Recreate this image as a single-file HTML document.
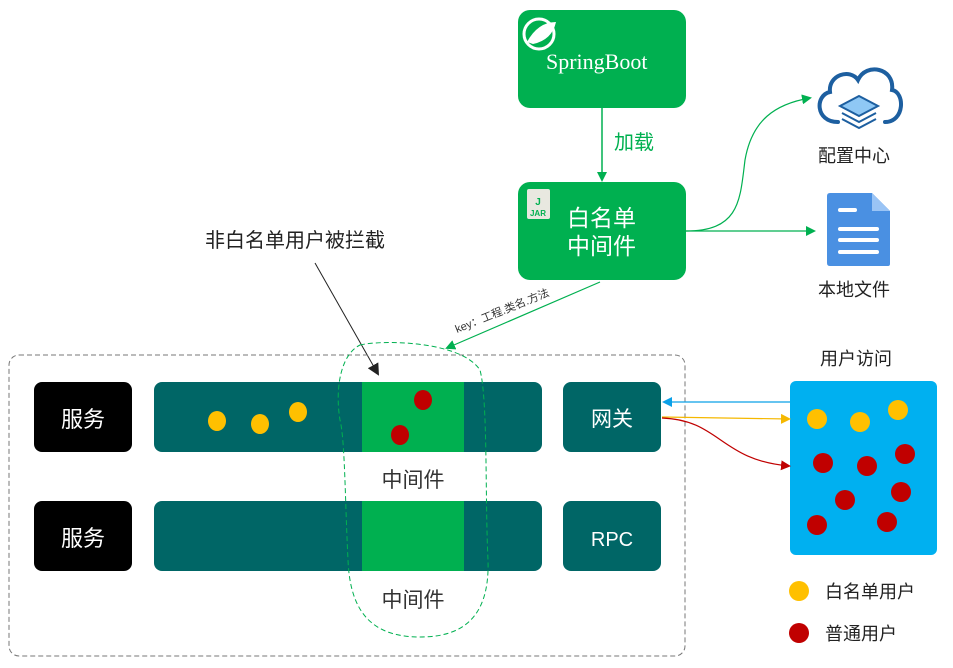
<!DOCTYPE html>
<html><head><meta charset="utf-8"><style>
body{margin:0;background:#fff}
svg{display:block}
text{font-family:"Liberation Sans","Noto Sans CJK SC",sans-serif}
</style></head><body>
<svg width="953" height="668" viewBox="0 0 953 668" xmlns="http://www.w3.org/2000/svg">
<defs>
<marker id="ag" markerWidth="10" markerHeight="10" refX="8" refY="5" orient="auto" markerUnits="userSpaceOnUse"><path d="M0,0 L10,5 L0,10z" fill="#00b050"/></marker>
<marker id="ak" markerWidth="12" markerHeight="12" refX="10" refY="6" orient="auto" markerUnits="userSpaceOnUse"><path d="M0,0 L12,6 L0,12z" fill="#222"/></marker>
<marker id="ab" markerWidth="10" markerHeight="10" refX="8" refY="5" orient="auto" markerUnits="userSpaceOnUse"><path d="M0,0 L10,5 L0,10z" fill="#0aa0e8"/></marker>
<marker id="ay" markerWidth="10" markerHeight="10" refX="8" refY="5" orient="auto" markerUnits="userSpaceOnUse"><path d="M0,0 L10,5 L0,10z" fill="#f5b800"/></marker>
<marker id="ar" markerWidth="10" markerHeight="10" refX="8" refY="5" orient="auto" markerUnits="userSpaceOnUse"><path d="M0,0 L10,5 L0,10z" fill="#c00000"/></marker>
</defs>
<rect x="518" y="10" width="168" height="98" rx="12" fill="#00b050"/>
<circle cx="539" cy="34" r="15" fill="none" stroke="#fff" stroke-width="3"/>
<path d="M527,42 Q538,22 556,22 Q552,40 533,44z" fill="#fff"/>
<text x="546" y="69" font-size="22" fill="#fff" style="font-family:'Liberation Serif',serif">SpringBoot</text>
<line x1="602" y1="108" x2="602" y2="180" stroke="#00b050" stroke-width="1.5" marker-end="url(#ag)"/>
<text x="614" y="149" font-size="20" fill="#00b050">加载</text>
<rect x="518" y="182" width="168" height="98" rx="12" fill="#00b050"/>
<rect x="527" y="189" width="23" height="30" rx="2" fill="#e8e8e0"/>
<text x="538" y="205" font-size="10" fill="#00b050" text-anchor="middle" font-weight="bold">J</text>
<text x="538" y="216" font-size="8" fill="#00b050" text-anchor="middle" font-weight="bold">JAR</text>
<text x="567" y="226" font-size="23" fill="#fff">白名单</text>
<text x="567" y="254" font-size="23" fill="#fff">中间件</text>
<path d="M686,231 C740,231 740,200 745,160 C752,120 775,104 810,98" fill="none" stroke="#00b050" stroke-width="1.2" marker-end="url(#ag)"/>
<line x1="686" y1="231" x2="814" y2="231" stroke="#00b050" stroke-width="1.2" marker-end="url(#ag)"/>
<path d="M838,122 C815,122 815,95 830,92 C828,75 850,68 858,80 C866,62 895,68 892,90 C905,92 905,122 885,122" fill="none" stroke="#1d5fa0" stroke-width="4" stroke-linecap="round"/>
<path d="M859,96 L878,106 L859,116 L840,106z" fill="#8fc8f5" stroke="#1d5fa0" stroke-width="2"/>
<path d="M842,113 L859,122 L876,113" fill="none" stroke="#1d5fa0" stroke-width="2"/>
<path d="M842,119 L859,128 L876,119" fill="none" stroke="#1d5fa0" stroke-width="2"/>
<text x="818" y="162" font-size="18" fill="#222">配置中心</text>
<path d="M830,193 L872,193 L890,211 L890,264 Q890,266 888,266 L830,266 Q827,266 827,263 L827,196 Q827,193 830,193z" fill="#4a90e2"/>
<path d="M872,193 L872,211 L890,211z" fill="#9ac4f5"/>
<g stroke="#fff" stroke-width="4" stroke-linecap="round"><line x1="840" y1="210" x2="855" y2="210"/><line x1="840" y1="229" x2="877" y2="229"/><line x1="840" y1="240" x2="877" y2="240"/><line x1="840" y1="252" x2="877" y2="252"/></g>
<text x="818" y="296" font-size="18" fill="#222">本地文件</text>
<line x1="600" y1="282" x2="447" y2="348" stroke="#00b050" stroke-width="1.2" marker-end="url(#ag)"/>
<text x="0" y="0" font-size="11" fill="#333" transform="translate(457,333) rotate(-22)">key：工程.类名.方法</text>
<text x="205" y="247" font-size="20" fill="#222">非白名单用户被拦截</text>
<line x1="315" y1="263" x2="378" y2="374" stroke="#222" stroke-width="1" marker-end="url(#ak)"/>
<rect x="9" y="355" width="676" height="301" rx="10" fill="none" stroke="#777" stroke-dasharray="5,3"/>
<rect x="34" y="382" width="98" height="70" rx="8" fill="#000"/>
<text x="83" y="427" font-size="22" fill="#fff" text-anchor="middle">服务</text>
<rect x="154" y="382" width="388" height="70" rx="8" fill="#006666"/>
<rect x="362" y="382" width="102" height="70" fill="#00b050"/>
<rect x="563" y="382" width="98" height="70" rx="8" fill="#006666"/>
<text x="612" y="426" font-size="21" fill="#fff" text-anchor="middle">网关</text>
<ellipse cx="217" cy="421" rx="9" ry="10" fill="#ffc000"/>
<ellipse cx="260" cy="424" rx="9" ry="10" fill="#ffc000"/>
<ellipse cx="298" cy="412" rx="9" ry="10" fill="#ffc000"/>
<ellipse cx="423" cy="400" rx="9" ry="10" fill="#c00000"/>
<ellipse cx="400" cy="435" rx="9" ry="10" fill="#c00000"/>
<text x="413" y="487" font-size="21" fill="#333" text-anchor="middle">中间件</text>
<rect x="34" y="501" width="98" height="70" rx="8" fill="#000"/>
<text x="83" y="546" font-size="22" fill="#fff" text-anchor="middle">服务</text>
<rect x="154" y="501" width="388" height="70" rx="8" fill="#006666"/>
<rect x="362" y="501" width="102" height="70" fill="#00b050"/>
<rect x="563" y="501" width="98" height="70" rx="8" fill="#006666"/>
<text x="612" y="546" font-size="20" fill="#fff" text-anchor="middle">RPC</text>
<text x="413" y="607" font-size="21" fill="#333" text-anchor="middle">中间件</text>
<path d="M360,345 C380,340 460,340 480,370 C488,400 485,500 488,560 C490,620 460,637 420,637 C370,637 350,610 348,560 C345,500 345,440 340,420 C335,390 340,355 360,345z" fill="none" stroke="#00b050" stroke-dasharray="5,3"/>
<text x="820" y="365" font-size="18" fill="#222">用户访问</text>
<rect x="790" y="381" width="147" height="174" rx="6" fill="#00b0f0"/>
<g fill="#ffc000"><ellipse cx="817" cy="419" rx="10" ry="10"/><ellipse cx="860" cy="422" rx="10" ry="10"/><ellipse cx="898" cy="410" rx="10" ry="10"/></g>
<g fill="#c00000"><ellipse cx="823" cy="463" rx="10" ry="10"/><ellipse cx="867" cy="466" rx="10" ry="10"/><ellipse cx="905" cy="454" rx="10" ry="10"/><ellipse cx="845" cy="500" rx="10" ry="10"/><ellipse cx="901" cy="492" rx="10" ry="10"/><ellipse cx="817" cy="525" rx="10" ry="10"/><ellipse cx="887" cy="522" rx="10" ry="10"/></g>
<line x1="790" y1="402" x2="664" y2="402" stroke="#0aa0e8" stroke-width="1.2" marker-end="url(#ab)"/>
<line x1="662" y1="417" x2="789" y2="419" stroke="#f5b800" stroke-width="1.2" marker-end="url(#ay)"/>
<path d="M662,418 C720,420 720,460 789,466" fill="none" stroke="#c00000" stroke-width="1.2" marker-end="url(#ar)"/>
<circle cx="799" cy="591" r="10" fill="#ffc000"/>
<text x="825" y="598" font-size="18" fill="#222">白名单用户</text>
<circle cx="799" cy="633" r="10" fill="#c00000"/>
<text x="825" y="640" font-size="18" fill="#222">普通用户</text>
</svg>
</body></html>
